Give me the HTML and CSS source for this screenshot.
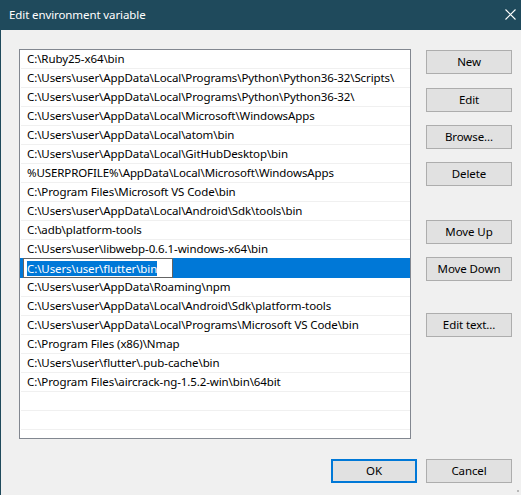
FILE: index.html
```html
<!DOCTYPE html>
<html>
<head>
<meta charset="utf-8">
<link rel="stylesheet" href="styles.css">
</head>
<body>
<div class="window">
  <div class="titlebar">
    <span class="title">Edit environment variable</span>
    <svg class="close" width="11" height="11" viewBox="0 0 11 11"><path d="M0.5 0.5 L10.5 10.5 M10.5 0.5 L0.5 10.5" stroke="#ffffff" stroke-width="1.1" fill="none"/></svg>
  </div>
  <div class="content">
    <div class="main">
      <div class="list">
        <div class="row">C:\Ruby25-x64\bin</div>
        <div class="row">C:\Users\user\AppData\Local\Programs\Python\Python36-32\Scripts\</div>
        <div class="row">C:\Users\user\AppData\Local\Programs\Python\Python36-32\</div>
        <div class="row">C:\Users\user\AppData\Local\Microsoft\WindowsApps</div>
        <div class="row">C:\Users\user\AppData\Local\atom\bin</div>
        <div class="row">C:\Users\user\AppData\Local\GitHubDesktop\bin</div>
        <div class="row">%USERPROFILE%\AppData\Local\Microsoft\WindowsApps</div>
        <div class="row">C:\Program Files\Microsoft VS Code\bin</div>
        <div class="row">C:\Users\user\AppData\Local\Android\Sdk\tools\bin</div>
        <div class="row">C:\adb\platform-tools</div>
        <div class="row">C:\Users\user\libwebp-0.6.1-windows-x64\bin</div>
        <div class="row selected"><div class="editbox"><span class="sel">C:\Users\user\flutter\bin</span></div></div>
        <div class="row">C:\Users\user\AppData\Roaming\npm</div>
        <div class="row">C:\Users\user\AppData\Local\Android\Sdk\platform-tools</div>
        <div class="row">C:\Users\user\AppData\Local\Programs\Microsoft VS Code\bin</div>
        <div class="row">C:\Program Files (x86)\Nmap</div>
        <div class="row">C:\Users\user\flutter\.pub-cache\bin</div>
        <div class="row">C:\Program Files\aircrack-ng-1.5.2-win\bin\64bit</div>
        <div class="row"></div>
        <div class="row"></div>
        <div class="row"></div>
      </div>
      <div class="buttons">
        <button class="btn b-new">New</button>
        <button class="btn b-edit">Edit</button>
        <button class="btn b-browse">Browse...</button>
        <button class="btn b-delete">Delete</button>
        <button class="btn b-up">Move Up</button>
        <button class="btn b-down">Move Down</button>
        <button class="btn b-text">Edit text...</button>
      </div>
    </div>
    <div class="footer">
      <button class="btn default">OK</button>
      <button class="btn">Cancel</button>
    </div>
  </div>
  <div class="grip"></div>
</div>
</body>
</html>
```

FILE: styles.css
```css
html, body {
  margin: 0;
  padding: 0;
  background: #f0f0f0;
}
body {
  font-family: "Noto Sans", "Open Sans", sans-serif;
  font-size: 11.5px;
  letter-spacing: -0.1px;
  color: #000;
}
.window {
  position: relative;
  width: 521px;
  height: 495px;
  box-sizing: border-box;
  border-left: 1px solid #1f4a5c;
  background: #f0f0f0;
  overflow: hidden;
}
.titlebar {
  height: 30px;
  background: #1f4a5c;
  display: flex;
  align-items: center;
  justify-content: space-between;
  padding: 0 5px 0 8px;
  color: #fff;
}
.title {
  font-size: 11.5px;
  line-height: 16px;
  margin-top: -1px;
}
.close {
  display: block;
  margin-top: -1px;
}
.content {
  padding: 19px 9px 0 18px;
}
.main {
  display: flex;
  gap: 15px;
}
.list {
  width: 392px;
  height: 390px;
  box-sizing: border-box;
  border: 1px solid #828790;
  background: #fff;
  overflow: hidden;
}
.row {
  height: 18px;
  line-height: 18px;
  border-bottom: 1px solid #f0f0f0;
  margin-left: 1px;
  padding-left: 6px;
  white-space: nowrap;
}
.row.selected {
  background: #0078d7;
  border-bottom-color: #0078d7;
  margin-left: 0;
  padding-left: 3px;
  height: 19px;
  margin-top: -1px;
}
.editbox {
  width: 150px;
  height: 20px;
  box-sizing: border-box;
  border: 1px solid #646464;
  background: #fff;
  padding: 2px 0 0 3px;
  line-height: 15px;
}
.sel {
  background: #0078d7;
  color: #fff;
  display: inline-block;
  line-height: 15px;
}
.buttons {
  display: flex;
  flex-direction: column;
  padding-top: 1px;
}
.btn {
  width: 86px;
  height: 24px;
  box-sizing: border-box;
  border: 1px solid #adadad;
  background: #e1e1e1;
  font-family: inherit;
  font-size: 11.5px;
  letter-spacing: -0.1px;
  color: #000;
  padding: 0;
  margin: 0;
  line-height: 20px;
}
.b-edit { margin-top: 14px; }
.b-browse { margin-top: 13px; }
.b-delete { margin-top: 13px; }
.b-up { margin-top: 34px; }
.b-down { margin-top: 13px; }
.b-text { margin-top: 32px; }
.footer {
  display: flex;
  justify-content: flex-end;
  gap: 9px;
  margin-top: 20px;
}
.btn.default {
  border: 2px solid #0078d7;
}
.grip {
  position: absolute;
  right: 2px;
  bottom: 3px;
  width: 2px;
  height: 2px;
  background: #b8b8b8;
}
```
